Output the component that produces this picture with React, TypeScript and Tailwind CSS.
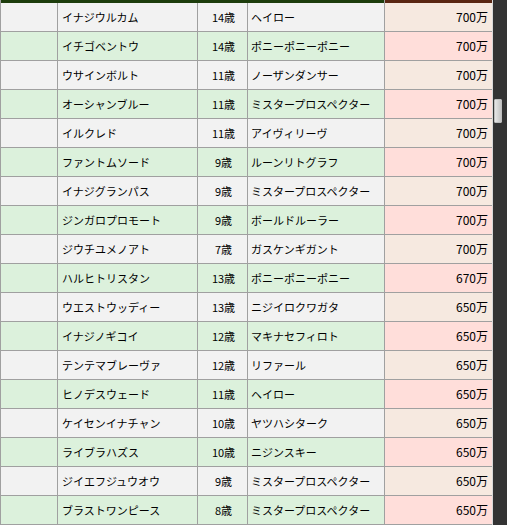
import React from 'react'

const rows = [
  { name: 'イナジウルカム', age: '14歳', sire: 'ヘイロー', price: '700万' },
  { name: 'イチゴベントウ', age: '14歳', sire: 'ポニーポニーポニー', price: '700万' },
  { name: 'ウサインボルト', age: '11歳', sire: 'ノーザンダンサー', price: '700万' },
  { name: 'オーシャンブルー', age: '11歳', sire: 'ミスタープロスペクター', price: '700万' },
  { name: 'イルクレド', age: '11歳', sire: 'アイヴィリーヴ', price: '700万' },
  { name: 'ファントムソード', age: '9歳', sire: 'ルーンリトグラフ', price: '700万' },
  { name: 'イナジグランパス', age: '9歳', sire: 'ミスタープロスペクター', price: '700万' },
  { name: 'ジンガロプロモート', age: '9歳', sire: 'ボールドルーラー', price: '700万' },
  { name: 'ジウチユメノアト', age: '7歳', sire: 'ガスケンギガント', price: '700万' },
  { name: 'ハルヒトリスタン', age: '13歳', sire: 'ポニーポニーポニー', price: '670万' },
  { name: 'ウエストウッディー', age: '13歳', sire: 'ニジイロクワガタ', price: '650万' },
  { name: 'イナジノギコイ', age: '12歳', sire: 'マキナセフィロト', price: '650万' },
  { name: 'テンテマブレーヴァ', age: '12歳', sire: 'リファール', price: '650万' },
  { name: 'ヒノデスウェード', age: '11歳', sire: 'ヘイロー', price: '650万' },
  { name: 'ケイセンイナチャン', age: '10歳', sire: 'ヤツハシターク', price: '650万' },
  { name: 'ライブラハズス', age: '10歳', sire: 'ニジンスキー', price: '650万' },
  { name: 'ジイエフジュウオウ', age: '9歳', sire: 'ミスタープロスペクター', price: '650万' },
  { name: 'ブラストワンピース', age: '8歳', sire: 'ミスタープロスペクター', price: '650万' },
]

const App = () => {
  return (
    <div className="flex w-[507px] h-[525px] overflow-hidden bg-[#f2f2f2] text-[11px] text-black [font-family:'Noto_Sans_CJK_JP','Noto_Sans',sans-serif]">
      <div className="w-[492px] shrink-0">
        {/* header (cut off) */}
        <div className="grid grid-cols-[58px_140px_50px_137px_107px] h-[3px]">
          <div className="bg-[#1d3d0c] border-l border-[#a0a0a0]"></div>
          <div className="bg-[#1d3d0c]"></div>
          <div className="bg-[#1d3d0c]"></div>
          <div className="bg-[#1d3d0c] border-r border-[#a0a0a0]"></div>
          <div className="bg-[#5a2612]"></div>
        </div>

        {rows.map((r, i) => {
          const even = i % 2 === 1
          const base = even ? 'bg-[#dcf1dc]' : 'bg-[#f2f2f2]'
          const price = even ? 'bg-[#ffdeda]' : 'bg-[#f6e9e0]'
          return (
            <div key={i} className="grid grid-cols-[58px_140px_50px_137px_107px] h-[29px]">
              <div className={`${base} border-l border-r border-b border-[#a0a0a0]`}></div>
              <div className={`${base} border-r border-b border-[#a0a0a0] flex items-center pl-[4px] whitespace-nowrap`}>
                {r.name}
              </div>
              <div className={`${base} border-r border-b border-[#a0a0a0] flex items-center justify-center pl-[2px]`}>
                {r.age}
              </div>
              <div className={`${base} border-r border-b border-[#a0a0a0] flex items-center pl-[3px] whitespace-nowrap`}>
                {r.sire}
              </div>
              <div className={`${price} border-b border-[#a0a0a0] flex items-center justify-end pr-[4px] text-[12px]`}>
                {r.price}
              </div>
            </div>
          )
        })}
      </div>

      {/* scrollbar */}
      <div className="w-[15px] shrink-0 bg-[#333333] border-l border-[#d8d8d8] pt-[99px] pl-[1px]">
        <div className="w-[8px] h-[24px] rounded-[1px] bg-gradient-to-r from-[#e6e6e6] to-[#c4c4c4] border border-[#bdbdbd]"></div>
      </div>
    </div>
  )
}

export default App
